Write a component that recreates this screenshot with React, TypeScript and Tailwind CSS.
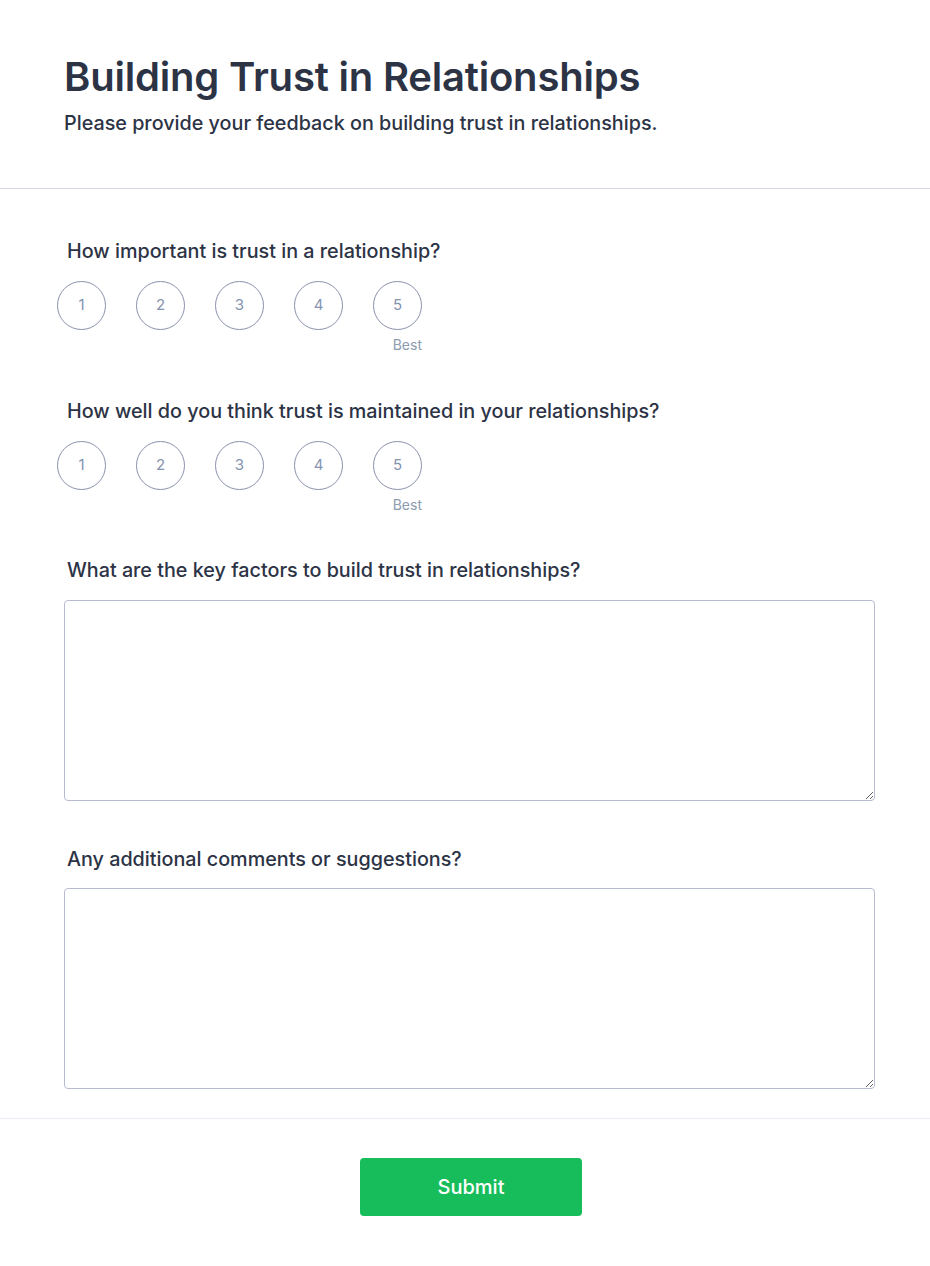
import React from "react";

const font = { fontFamily: "Inter, 'Noto Sans', sans-serif" };

function Scale({ label }: { label: string }) {
  return (
    <div>
      <div className="pl-[3px] text-[19.75px] leading-[28px] font-medium text-[#2c3345]">{label}</div>
      <div className="mt-[16px] ml-[-7px] flex gap-[30px]">
        {[1, 2, 3, 4, 5].map((n) => (
          <div key={n} className="flex flex-col items-end">
            <div className="w-[49px] h-[49px] rounded-full border border-[#8a90aa] flex items-center justify-center text-[15px] text-[#8494b0]">
              {n}
            </div>
            {n === 5 && <div className="mt-[5px] text-[14px] leading-[20px] text-[#8c9bb0]">Best</div>}
            {n !== 5 && <div className="mt-[5px] h-[20px]" />}
          </div>
        ))}
      </div>
    </div>
  );
}

function Area({ label, gap }: { label: string; gap: "a" | "b" }) {
  return (
    <div>
      <div className="pl-[3px] text-[19.75px] leading-[28px] font-medium text-[#2c3345]">{label}</div>
      <textarea
        className={
          (gap === "a" ? "mt-[16px] " : "mt-[15px] ") +
          "block w-[811px] h-[201px] rounded-[4px] border border-[#b7bbd0] bg-white outline-none"
        }
      />
    </div>
  );
}

export default function App() {
  return (
    <div className="w-[930px] min-h-[1266px] bg-white" style={font}>
      <div className="px-16 pt-[53px] pb-[51px] border-b border-[#d8dae9]">
        <h1 className="text-[40px] leading-[48px] font-semibold text-[#2c3345] tracking-[-0.2px]">
          Building Trust in Relationships
        </h1>
        <p className="mt-[8px] text-[19.75px] leading-[28px] font-medium text-[#2c3345]">
          Please provide your feedback on building trust in relationships.
        </p>
      </div>
      <div className="px-16 pt-[48px] pb-[29px] border-b border-[#ebecf3]">
        <Scale label="How important is trust in a relationship?" />
        <div className="mt-[42px]">
          <Scale label="How well do you think trust is maintained in your relationships?" />
        </div>
        <div className="mt-[41px]">
          <Area gap="a" label="What are the key factors to build trust in relationships?" />
        </div>
        <div className="mt-[44px]">
          <Area gap="b" label="Any additional comments or suggestions?" />
        </div>
      </div>
      <div className="flex justify-center pl-[12px] pt-[39px] pb-[50px]">
        <button className="w-[222px] h-[58px] rounded-[4px] bg-[#18bd5b] text-white text-[20px] font-medium">
          Submit
        </button>
      </div>
    </div>
  );
}
